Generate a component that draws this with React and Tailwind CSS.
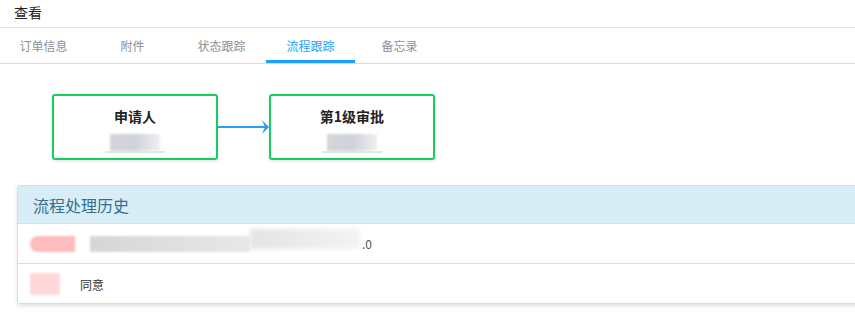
import React from 'react';

const TABS = ['订单信息', '附件', '状态跟踪', '流程跟踪', '备忘录'];
const ACTIVE = '流程跟踪';

const FONT = { fontFamily: '"Noto Sans CJK SC", "Noto Sans", sans-serif' };

export default function App() {
  return (
    <div className="w-[855px] h-[317px] overflow-hidden bg-white text-[#333]" style={FONT}>
      <div className="h-[28px] border-b border-[#e2e2e2] pl-[14px] pb-[3px] flex items-center text-[14px] leading-none text-[#222]">
        查看
      </div>

      <div className="h-[36px] border-b border-[#d5dbe3] flex -ml-[1px]">
        {TABS.map((t) => (
          <div
            key={t}
            className={`w-[89px] flex items-center justify-center text-[12px] relative ${
              t === ACTIVE ? 'text-[#1e9fff]' : 'text-[#8b9098]'
            }`}
          >
            {t}
            {t === ACTIVE && <span className="absolute left-0 right-0 bottom-0 h-[3px] bg-[#1e9fff]" />}
          </div>
        ))}
      </div>

      <div className="flex items-center pl-[52px] pt-[30px]">
        <FlowNode title="申请人" />
        <Arrow />
        <FlowNode title="第1级审批" />
      </div>

      <div className="ml-[17px] mt-[25px] w-[860px] border border-[#bce8f1] rounded-[3px] shadow-[0_2px_4px_rgba(0,0,0,0.12)] bg-white">
        <div className="h-[38px] bg-[#d9edf7] border-b border-[#bce8f1] flex items-center pl-[15px] text-[16px] text-[#31708f]">
          流程处理历史
        </div>
        <div className="h-[40px] border-b border-[#ddd] flex items-center pl-[12px]">
          <div className="w-[45px] h-[16px] bg-[#ffbcbc] rounded-l-[8px] blur-[1px]" />
          <div className="ml-[15px] w-[160px] h-[16px] bg-gradient-to-r from-[#d6d6d8] to-[#e8e8ea] blur-[1px]" />
          <div className="w-[110px] h-[20px] -mt-[10px] bg-gradient-to-r from-[#e4e4e6] to-[#f3f3f4] blur-[2px]" />
          <span className="ml-[2px] text-[12px] text-[#555]">.0</span>
        </div>
        <div className="h-[39px] flex items-center pl-[12px]">
          <div className="w-[30px] h-[22px] bg-[#ffd9d9] blur-[1px]" />
          <span className="ml-[20px] text-[12px] text-[#333] mt-[2px]">同意</span>
        </div>
      </div>
    </div>
  );
}

function FlowNode({ title }) {
  return (
    <div className="w-[166px] h-[66px] border-[2px] border-[#18cc60] rounded-[3px] shadow-[0_1px_3px_rgba(0,0,0,0.12)] flex flex-col items-center pt-[10px]">
      <div className="text-[14px] font-bold text-[#222] leading-[20px]">{title}</div>
      <div className="mt-[8px] flex flex-col items-center">
        <div className="w-[50px] h-[17px] bg-gradient-to-r from-[#d4d6da] via-[#cfd2d7] to-[#eef0f2] blur-[1px]" />
        <div className="w-[60px] h-[2px] bg-[#d2f2dd]" />
      </div>
    </div>
  );
}

function Arrow() {
  return (
    <svg width="51" height="20" viewBox="0 0 51 20" className="block" aria-hidden="true">
      <line x1="0" y1="10" x2="47" y2="10" stroke="#2a9df4" strokeWidth="2" />
      <path d="M44 3 L51 10 L44 17 L47 10 Z" fill="#2a9df4" />
    </svg>
  );
}
